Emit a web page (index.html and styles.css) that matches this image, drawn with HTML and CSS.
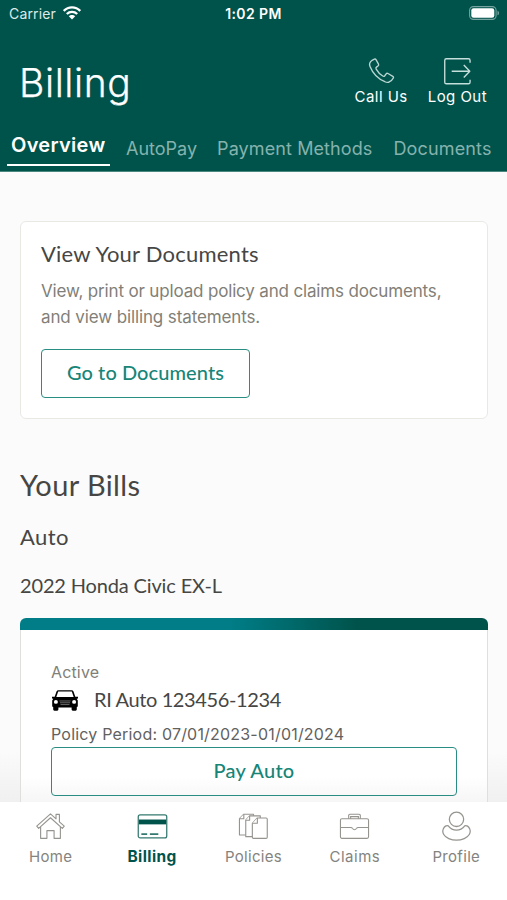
FILE: index.html
```html
<!DOCTYPE html>
<html lang="en">
<head>
<meta charset="utf-8">
<title>Billing</title>
<link rel="stylesheet" href="styles.css">
</head>
<body>
<div class="screen">
  <header class="header">
    <div class="status">
      <div class="carrier"><span class="carrier-name">Carrier</span>
        <svg width="18" height="14" viewBox="0 0 18 14"><g fill="none" stroke="#fff" stroke-width="2.3"><path d="M.8 4.900C5.300 .2 12.700 .2 17.200 4.900"/><path d="M3.800 8c2.900-2.800 7.500-2.800 10.400 0"/></g><path d="M9 13.500 5.800 10.300c1.700-1.700 4.700-1.700 6.400 0z" fill="#fff"/></svg>
      </div>
      <span class="time">1:02 PM</span>
      <svg class="battery" width="31" height="14" viewBox="0 0 31 14"><rect x=".6" y=".6" width="26.500" height="12.800" rx="3.800" fill="none" stroke="#75a39f" stroke-width="1.100"/><rect x="2.300" y="2.300" width="23" height="9.400" rx="2.200" fill="#fff"/><path d="M28.500 4.700c2 .6 2 4 0 4.600z" fill="#75a39f"/></svg>
    </div>
    <div class="title-row">
      <h1 class="title">Billing</h1>
      <div class="actions">
        <div class="action">
          <svg width="29" height="29" viewBox="0 0 30 30"><path d="M5.300 3.400 7.600 2.200c.8-.4 1.300-.2 1.700.5l2.600 4.700c.4.800.2 1.400-.5 1.900L9.800 10.500c-.8.600-.8 1.200-.3 2 1.700 3 3.900 5.400 6.800 7.200.8.500 1.500.400 2.100-.3l1.400-1.900c.5-.7 1.200-.8 1.900-.4l5 3c.7.400.9 1 .5 1.700-1 2.200-2.700 3.700-4.900 4.300-1.300.3-2.500.1-3.800-.5C11.400 22.700 6 17 3.100 9.900 2.100 7.300 3.200 4.800 5.300 3.400z" fill="none" stroke="#b9d6d3" stroke-width="1.400"/></svg>
          <span class="label">Call Us</span>
        </div>
        <div class="action">
          <svg width="29" height="29" viewBox="0 0 30 30"><path d="M28 6V3.500Q28 1.800 26.300 1.800H3.500Q1.800 1.800 1.800 3.500V26Q1.800 27.700 3.500 27.700H26.300Q28 27.700 28 26V23.500M9 14.700H27.500M21.500 8.200 27.700 14.700 21.500 21.200" fill="none" stroke="#c5dfdc" stroke-width="1.400" stroke-linejoin="round"/></svg>
          <span class="label">Log Out</span>
        </div>
      </div>
    </div>
    <nav class="tabs">
      <a class="tab active">Overview</a>
      <a class="tab autopay">AutoPay</a>
      <a class="tab methods">Payment Methods</a>
      <a class="tab docs">Documents</a>
    </nav>
  </header>
  <main class="content">
    <section class="card">
      <h2 class="card-title">View Your Documents</h2>
      <p class="card-text">View, print or upload policy and claims documents,<br><span class="second">and view billing statements.</span></p>
      <a class="button go">Go to Documents</a>
    </section>
    <h2 class="bills">Your Bills</h2>
    <h3 class="auto">Auto</h3>
    <p class="vehicle">2022 Honda Civic EX-L</p>
    <section class="bill">
      <div class="bill-bar"></div>
      <div class="bill-body">
        <div class="state">Active</div>
        <div class="policy">
          <svg width="28" height="21" viewBox="0 0 28 22" preserveAspectRatio="none"><path d="M5.500 1.500Q6 .3 7.500.3h13q1.500 0 2 1.200L24.300 7l2.700.2v1.600l-1.300.3 1.100 1.800v6.300l-1 .5v2.800q0 1.200-1.200 1.200h-2.800q-1.200 0-1.200-1.200v-2.200H7.400v2.200q0 1.200-1.200 1.200H3.400q-1.200 0-1.200-1.200v-2.800l-1-.5v-6.300l1.100-1.800L1 8.800V7.200L3.700 7z" fill="#000"/><path d="M7.200 1.600h13.600l1.900 5.800H5.300z" fill="#fff"/><circle cx="4.900" cy="12.500" r="2" fill="#fff"/><circle cx="23.100" cy="12.500" r="2" fill="#fff"/><path d="M8.500 11.500h11M9 13.400h10M9.500 15.300h9" stroke="#999" stroke-width=".7"/></svg>
          <span class="policy-name">RI Auto 123456-1234</span>
        </div>
        <div class="period">Policy Period: 07/01/2023-01/01/2024</div>
        <a class="button pay">Pay Auto</a>
      </div>
    </section>
  </main>
  <nav class="tabbar">
    <a class="item"><svg width="31" height="31" viewBox="0 0 32 32"><g fill="none" stroke="#96948f" stroke-width="1.150" stroke-linejoin="round"><path d="M16 3 1.800 15.700l2 2.200L16 7l12.200 10.900 2-2.200-5-4.500V3.500h-3.500v4.600z"/><path d="M5.800 16.500v11.700h6.500v-8h7.400v8h6.500V16.500"/></g></svg><span>Home</span></a>
    <a class="item selected"><svg width="31" height="31" viewBox="0 0 32 32"><rect x="1.300" y="4" width="29.400" height="23.800" rx="2" fill="none" stroke="#34796f" stroke-width="1.300"/><path d="M2 8.800h28v5H2z" fill="#00534b"/><path d="M4.500 23.900h6M13.300 23.900h8.700" stroke="#34796f" stroke-width="2"/></svg><span>Billing</span></a>
    <a class="item"><svg width="31" height="31" viewBox="0 0 32 32"><g fill="#fff" stroke="#96948f" stroke-width="1.150" stroke-linejoin="round"><path d="M6 3.300h10v21.500H1.500V8z"/><path d="M1.500 8H6V3.300"/><path d="M12 5h11v21.500H8V9.500z"/><path d="M8 9.500h4V5"/><path d="M20 7.200h9q1.200 0 1.200 1.200V27q0 1.200-1.200 1.200H16q-1.200 0-1.200-1.200V12.700z"/><path d="M14.800 12.700H20V7.200"/></g></svg><span>Policies</span></a>
    <a class="item"><svg width="31" height="31" viewBox="0 0 32 32"><g fill="none" stroke="#96948f" stroke-width="1.150"><rect x="1.500" y="8" width="29" height="20.200" rx="1.500"/><path d="M10 8V4.500q0-1.200 1.200-1.200h9.600q1.200 0 1.200 1.200V8M12 8V5.800h8V8M1.500 17h10.800q1 0 1.500.8 2.200 3 4.400 0 .5-.8 1.500-.8h10.800"/></g></svg><span class="t-claims">Claims</span></a>
    <a class="item"><svg width="31" height="31" viewBox="0 0 32 32"><g fill="none" stroke="#96948f" stroke-width="1.300"><circle cx="16" cy="8.600" r="7.400"/><path d="M7.500 15.300c4.500 6 12.500 6 17 0 2-1 4 .7 5.200 3.400 1.500 3.800-1 7.800-5.700 9.800-5 2-11 2-16 0-4.700-2-7.200-6-5.700-9.800 1.200-2.700 3.200-4.400 5.200-3.400z"/></g></svg><span>Profile</span></a>
  </nav>
</div>
</body>
</html>
```
FILE: styles.css
```css
* { box-sizing: border-box; }
body { margin: 0; font-family: Inter, "Liberation Sans", sans-serif; }
h1, h2, h3, p { margin: 0; font-weight: 400; }
svg { display: block; flex: none; }
span, a { white-space: nowrap; }
.screen { width: 507px; height: 900px; display: flex; flex-direction: column; overflow: hidden; background: #fbfbfb; }
.header { height: 172px; flex: none; background: #00534b; border-bottom: 1px solid #4b8781; display: flex; flex-direction: column; color: #fff; }
.status { height: 27px; display: grid; grid-template-columns: 1fr auto 1fr; align-items: center; padding: 0 7px 0 9px; font-size: 14px; }
.carrier { display: flex; align-items: center; gap: 7px; }
.carrier svg { margin-top: -1px; }
.carrier-name { color: #dceae8; letter-spacing: .15px; }
.time { font-weight: 600; font-size: 14px; letter-spacing: .4px; margin-left: -2px; }
.battery { justify-self: end; margin-top: -1px; }
.title-row { height: 106px; display: flex; justify-content: space-between; padding: 0 20px 0 19px; }
.title { font-size: 39px; line-height: 48px; font-weight: 300; margin-top: 32px; letter-spacing: .6px; -webkit-text-stroke: .25px #fff; }
.actions { display: flex; gap: 20px; padding-top: 30px; }
.action { display: flex; flex-direction: column; align-items: center; font-size: 15px; line-height: 20px; gap: 1px; }
.label { letter-spacing: .45px; }
.tabs { display: flex; height: 33px; padding-left: 7px; align-items: flex-start; font-size: 18px; }
.tab { color: #85b2ad; line-height: 24px; padding-top: 4px; }
.tab.active { color: #fff; font-weight: 600; font-size: 20px; letter-spacing: .3px; width: 103px; height: 33px; padding: 0 0 0 4px; border-bottom: 2px solid #fff; margin-right: 16px; }
.autopay { margin-right: 20px; }
.methods { margin-right: 21px; letter-spacing: .1px; }
.docs { letter-spacing: .15px; }
.content { flex: 1; min-height: 0; overflow: hidden; padding: 49px 19px 0 20px; color: #464644; background: linear-gradient(#fbfbfb 92%, #f0f0f0); }
.card { height: 198px; background: #fff; border: 1px solid #e9e9e4; border-radius: 6px; padding: 18px 20px; }
.card-title { font-family: Lato, sans-serif; font-size: 22px; line-height: 28px; letter-spacing: .22px; }
.card-text { color: #817f78; font-size: 17px; line-height: 26px; margin-top: 10px; white-space: nowrap; letter-spacing: -.16px; }
.second { letter-spacing: -.12px; }
.button { display: flex; align-items: center; justify-content: center; border: 1px solid #2a8d83; border-radius: 4px; color: #178577; font-family: Lato, sans-serif; font-weight: 500; font-size: 20px; height: 49px; padding-bottom: 3px; }
.go { width: 209px; margin-top: 19px; letter-spacing: .08px; }
.bills { font-family: Lato, sans-serif; font-size: 29px; line-height: 36px; margin-top: 48px; letter-spacing: .4px; }
.auto { font-family: Lato, sans-serif; font-size: 22px; line-height: 28px; margin-top: 20px; letter-spacing: .45px; }
.vehicle { font-family: Lato, sans-serif; font-size: 20px; line-height: 26px; margin-top: 21px; letter-spacing: -.15px; }
.bill { margin-top: 20px; height: 220px; border-radius: 6px 6px 0 0; overflow: hidden; background: linear-gradient(#fff 72%, #f5f5f5 85%); }
.bill-bar { height: 12px; background: linear-gradient(90deg, #007d87 45%, #00534b 72%); }
.bill-body { border: 1px solid #dfdfdd; border-top: 0; height: 208px; padding: 32px 30px 0; }
.state { color: #817f78; font-size: 16px; line-height: 20px; letter-spacing: .15px; }
.policy { display: flex; align-items: center; gap: 15px; height: 36px; }
.policy-name { font-family: Lato, sans-serif; font-size: 20px; letter-spacing: -.37px; margin-top: -2px; }
.period { font-size: 16px; line-height: 22px; margin-top: 5px; color: #62615e; white-space: nowrap; letter-spacing: .2px; }
.pay { margin-top: 2px; letter-spacing: .25px; }
.tabbar { height: 98px; flex: none; background: #fff; display: grid; grid-template-columns: repeat(5, 1fr); padding-top: 9px; }
.item { display: flex; flex-direction: column; align-items: center; color: #85837e; font-size: 15px; line-height: 20px; gap: 5px; letter-spacing: .3px; }
.t-claims { letter-spacing: .5px; }
.selected { color: #00534b; font-weight: 700; font-size: 15.5px; letter-spacing: .4px; }
```
